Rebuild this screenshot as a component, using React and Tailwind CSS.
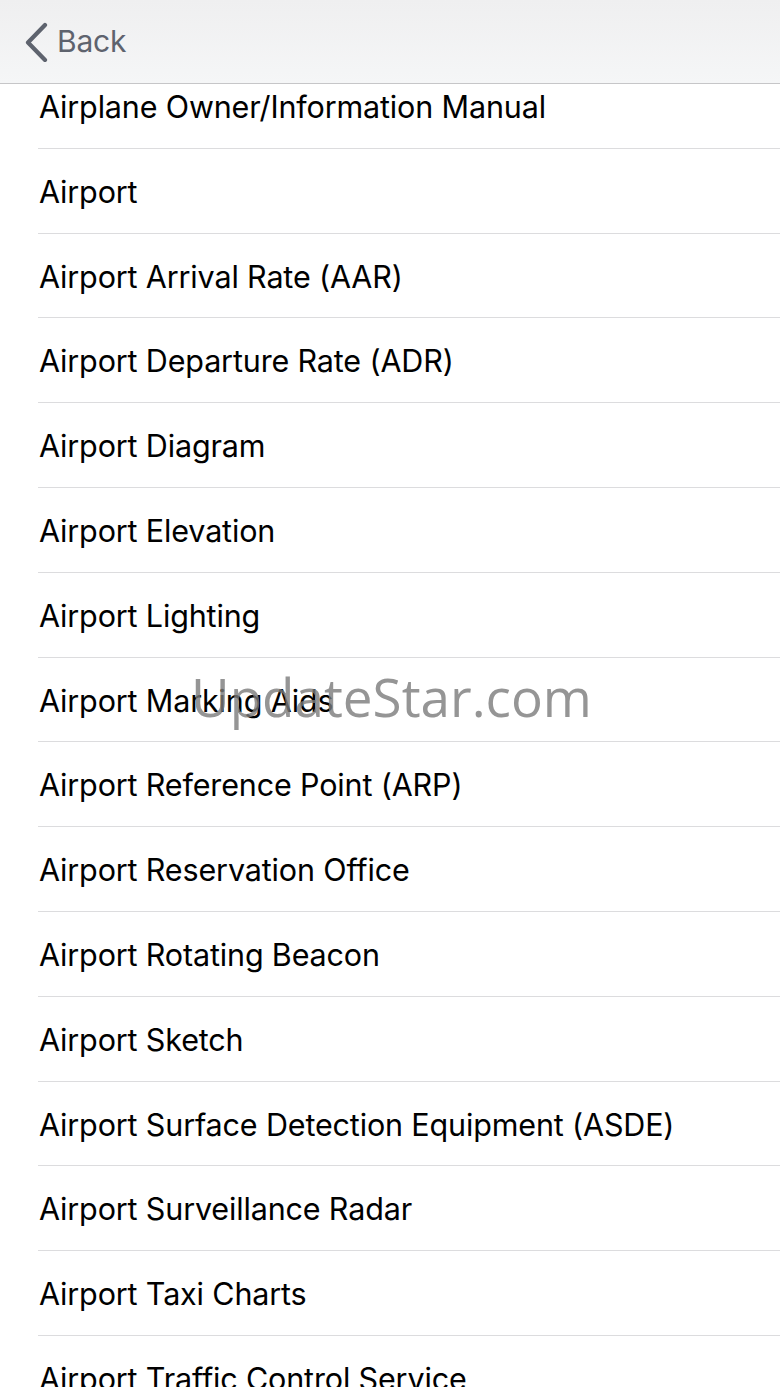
import React from 'react';

const items = [
  'Airplane Owner/Information Manual',
  'Airport',
  'Airport Arrival Rate (AAR)',
  'Airport Departure Rate (ADR)',
  'Airport Diagram',
  'Airport Elevation',
  'Airport Lighting',
  'Airport Marking Aids',
  'Airport Reference Point (ARP)',
  'Airport Reservation Office',
  'Airport Rotating Beacon',
  'Airport Sketch',
  'Airport Surface Detection Equipment (ASDE)',
  'Airport Surveillance Radar',
  'Airport Taxi Charts',
  'Airport Traffic Control Service',
];

export default function App() {
  return (
    <div
      className="relative w-[780px] h-[1387px] overflow-hidden bg-white"
      style={{ fontFamily: 'Inter, "Liberation Sans", sans-serif' }}
    >
      {/* nav bar */}
      <header className="relative z-10 h-[84px] flex items-center bg-gradient-to-b from-[#efeff0] to-[#f5f6f7] border-b border-[#c6c6c8]">
        <div className="flex items-center pl-[24px] gap-[9px] text-[#5e636e]">
          <svg width="24" height="40" viewBox="0 0 24 40" fill="none" className="mt-[1px]">
            <path d="M21 3 L4 20.5 L21 38" stroke="currentColor" strokeWidth="4.2" strokeLinecap="round" strokeLinejoin="round" />
          </svg>
          <span className="text-[30px] tracking-[-0.2px]">Back</span>
        </div>
      </header>

      {/* list */}
      <ul className="-mt-[20px]">
        {items.map((t) => (
          <li key={t} className="pl-[38px]">
            <div className="h-[84.8px] flex items-center pt-[2px] border-b border-[#dcdcde] text-[30.5px] text-black pl-[1px] tracking-[-0.15px]">
              {t}
            </div>
          </li>
        ))}
      </ul>

      {/* watermark */}
      <div
        className="absolute left-[191px] top-[670px] text-[53px] leading-none text-[#7a7a7a]/80 pointer-events-none"
        style={{ fontFamily: '"Open Sans", sans-serif' }}
      >
        UpdateStar.com
      </div>
    </div>
  );
}
